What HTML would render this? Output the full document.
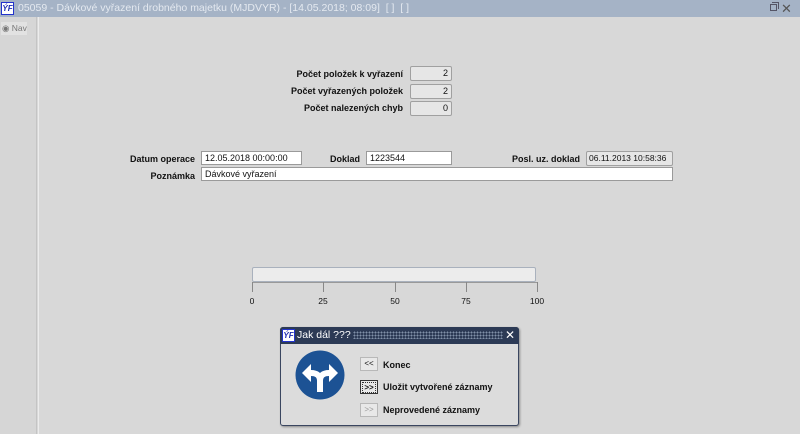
<!DOCTYPE html>
<html><head><meta charset="utf-8"><style>
*{box-sizing:border-box;margin:0;padding:0}
body{width:800px;height:434px;background:#d8d8d8;font-family:"Liberation Sans",Arial,sans-serif;font-size:9px;color:#111;position:relative;overflow:hidden}
.abs{position:absolute;white-space:nowrap}
.title{left:0;top:0;width:800px;height:17px;background:#a5b3c6;color:#e4e9f0;font-size:10.5px;line-height:17px;padding-left:18px}
.logo{width:13px;height:13px;background:#fff;border:1px solid #2233cc;color:#1a2bb0;font-weight:bold;font-style:italic;font-size:8px;line-height:11px;text-align:center}
.lbl{font-weight:bold;text-align:right;font-size:9px}
.inp{background:#fff;border:1px solid #9a9a9a;height:14px;line-height:12px;padding-left:3px;font-size:9px}
.ro{background:#e6e6e6;border:1px solid #a0a0a0;height:15px;line-height:13px;text-align:right;padding-right:3px;border-radius:2px}
.tick{width:1px;height:10px;background:#888;top:282px}
.tl{top:296px;font-size:8.5px;width:30px;text-align:center}
.btn{width:18px;height:14px;background:#e8e8e8;border:1px solid #b8b8b8;font-size:8px;line-height:12px;text-align:center}
.bl{font-weight:bold;font-size:9px}
</style></head><body>
<div class="abs title">05059 - Dávkové vyřazení drobného majetku (MJDVYR) - [14.05.2018; 08:09]&nbsp; [ ]&nbsp; [ ]</div>
<div class="abs logo" style="left:1px;top:2px">ÝF</div>
<div class="abs" style="left:770px;top:4px;width:7px;height:7px;border:1px solid #556;"></div>
<div class="abs" style="left:772px;top:2px;width:7px;height:7px;border-top:1px solid #556;border-right:1px solid #556"></div>
<div class="abs" style="left:781px;top:0px;font-size:13px;color:#555;line-height:17px">✕</div>
<div class="abs" style="left:0;top:17px;width:37px;height:417px;background:#d6d6d6;border-right:1px solid #c4c4c4"></div>
<div class="abs" style="left:38px;top:17px;width:1px;height:417px;background:#ececec"></div>
<div class="abs" style="left:1px;top:22px;width:26px;height:13px;background:#e2e2e2;color:#777;font-size:8.5px;line-height:13px;padding-left:1px">◉ Nav</div>

<div class="abs lbl" style="left:250px;top:69px;width:153px">Počet položek k vyřazení</div>
<div class="abs lbl" style="left:250px;top:86px;width:153px">Počet vyřazených položek</div>
<div class="abs lbl" style="left:250px;top:103px;width:153px">Počet nalezených chyb</div>
<div class="abs ro" style="left:410px;top:66px;width:42px">2</div>
<div class="abs ro" style="left:410px;top:84px;width:42px">2</div>
<div class="abs ro" style="left:410px;top:101px;width:42px">0</div>

<div class="abs lbl" style="left:100px;top:154px;width:95px">Datum operace</div>
<div class="abs inp" style="left:201px;top:151px;width:101px">12.05.2018 00:00:00</div>
<div class="abs lbl" style="left:300px;top:154px;width:60px">Doklad</div>
<div class="abs inp" style="left:366px;top:151px;width:86px">1223544</div>
<div class="abs lbl" style="left:480px;top:154px;width:100px">Posl. uz. doklad</div>
<div class="abs ro" style="left:586px;top:151px;width:87px;text-align:left;padding-left:2px;padding-right:0;font-size:8.5px">06.11.2013 10:58:36</div>
<div class="abs lbl" style="left:100px;top:171px;width:95px">Poznámka</div>
<div class="abs inp" style="left:201px;top:167px;width:472px">Dávkové vyřazení</div>

<div class="abs" style="left:252px;top:267px;width:284px;height:15px;background:#ececec;border:1px solid #a9b1bd;border-radius:2px"></div>
<div class="abs" style="left:252px;top:282px;width:285px;height:1px;background:#999"></div>
<div class="abs tick" style="left:252px"></div><div class="abs tick" style="left:323px"></div><div class="abs tick" style="left:395px"></div><div class="abs tick" style="left:466px"></div><div class="abs tick" style="left:537px"></div>
<div class="abs tl" style="left:237px">0</div><div class="abs tl" style="left:308px">25</div><div class="abs tl" style="left:380px">50</div><div class="abs tl" style="left:451px">75</div><div class="abs tl" style="left:522px">100</div>

<div class="abs" style="left:280px;top:327px;width:239px;height:99px;background:#dcdcdc;border:1px solid #3a4660;border-radius:3px;box-shadow:1px 1px 2px #888"></div>
<div class="abs" style="left:280px;top:327px;width:239px;height:17px;background:#2c3a55;border-radius:3px 3px 0 0;color:#fff;font-size:10.5px;line-height:17px;padding-left:17px">Jak dál ???</div>
<div class="abs" style="left:353px;top:331px;width:150px;height:8px;background-image:radial-gradient(#8090a8 0.8px,transparent 1px);background-size:3px 3px"></div>
<div class="abs" style="left:505px;top:327px;color:#fff;font-size:12px;line-height:17px">✕</div>
<div class="abs logo" style="left:282px;top:329px">ÝF</div>
<svg class="abs" style="left:295px;top:350px" width="50" height="50" viewBox="0 0 50 50">
<circle cx="25" cy="25" r="24.5" fill="#1c5294"/>
<path d="M25 42V31Q25 23 16 23H14M25 31Q25 23 34 23H36" fill="none" stroke="#fff" stroke-width="6"/>
<path d="M7 23L16 14V32Z M43 23L34 14V32Z" fill="#fff"/>
</svg>
<div class="abs btn" style="left:360px;top:357px">&lt;&lt;</div>
<div class="abs bl" style="left:383px;top:360px">Konec</div>
<div class="abs btn" style="left:360px;top:380px;border:1px solid #333;font-weight:bold"><span style="display:block;margin:1px;border:1px dotted #333;line-height:9px">&gt;&gt;</span></div>
<div class="abs bl" style="left:383px;top:382px">Uložit vytvořené záznamy</div>
<div class="abs btn" style="left:360px;top:403px;color:#999">&gt;&gt;</div>
<div class="abs bl" style="left:383px;top:405px">Neprovedené záznamy</div>
</body></html>
